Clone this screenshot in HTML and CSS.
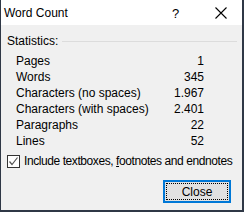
FILE: index.html
```html
<!DOCTYPE html>
<html>
<head>
<meta charset="utf-8">
<link rel="stylesheet" href="styles.css">
</head>
<body>
<div class="window">
  <div class="titlebar">
    <span class="title">Word Count</span>
    <span class="help">?</span>
    <svg class="close-x" width="12" height="12" viewBox="0 0 12 12"><path d="M0.5 0.5 L11.5 11.5 M11.5 0.5 L0.5 11.5" stroke="#000" stroke-width="1.1" fill="none"/></svg>
  </div>
  <div class="content">
    <div class="group-head">
      <span>Statistics:</span>
      <span class="rule"></span>
    </div>
    <div class="stats">
      <div class="row"><span>Pages</span><span>1</span></div>
      <div class="row"><span>Words</span><span>345</span></div>
      <div class="row"><span>Characters (no spaces)</span><span>1.967</span></div>
      <div class="row"><span>Characters (with spaces)</span><span>2.401</span></div>
      <div class="row"><span>Paragraphs</span><span>22</span></div>
      <div class="row"><span>Lines</span><span>52</span></div>
    </div>
    <div class="check">
      <span class="box"><svg width="11" height="11" viewBox="0 0 11 11"><path d="M1.5 5.5 L4 8.5 L9.5 1.5" stroke="#555" stroke-width="1.2" fill="none"/></svg></span>
      <span class="check-label">Include textboxes, <u>f</u>ootnotes and endnotes</span>
    </div>
    <div class="actions">
      <button class="btn"><span class="focus">Close</span></button>
    </div>
  </div>
</div>
</body>
</html>
```
FILE: styles.css
```css
html, body {
  margin: 0;
  padding: 0;
  background: #2f3846;
  width: 244px;
  height: 212px;
  overflow: hidden;
}
.window {
  margin-left: 1px;
  width: 241px;
  height: 210px;
  background: #f0f0f0;
  font-family: "Liberation Sans", Arial, sans-serif;
  font-size: 12px;
  color: #000;
}
.titlebar {
  height: 25px;
  background: #fff;
  display: flex;
  align-items: center;
  position: relative;
}
.title {
  margin-left: 3px;
  font-size: 12px;
  margin-top: 1px;
}
.help {
  position: absolute;
  left: 171px;
  top: 6px;
  font-size: 13px;
}
.close-x {
  position: absolute;
  left: 214px;
  top: 7px;
}
.content {
  padding: 8px 5px 0 6px;
}
.group-head {
  display: flex;
  align-items: center;
  height: 16px;
  line-height: 16px;
}
.rule {
  flex: 1;
  margin-left: 4px;
  border-top: 1px solid #dcdcdc;
}
.stats {
  margin-top: 4px;
  margin-left: 9px;
  width: 188px;
}
.row {
  display: flex;
  justify-content: space-between;
  height: 16px;
  line-height: 16px;
}
.check {
  margin-top: 4px;
  display: flex;
  align-items: center;
  height: 16px;
  line-height: 16px;
  white-space: nowrap;
}
.check-label {
  letter-spacing: -0.42px;
}
.box {
  width: 11px;
  height: 11px;
  border: 1px solid #333;
  background: #fff;
  margin-right: 4px;
  display: flex;
  flex: none;
}
.actions {
  display: flex;
  justify-content: flex-end;
  margin-top: 11px;
  padding-right: 6px;
}
.btn {
  width: 68px;
  height: 23px;
  border: 2px solid #0078d7;
  background: #e1e1e1;
  padding: 1px;
  margin: 0;
  font-family: "Liberation Sans", Arial, sans-serif;
  font-size: 12px;
  color: #000;
  display: flex;
}
.focus {
  flex: 1;
  border: 1px dotted #000;
  display: flex;
  align-items: center;
  justify-content: center;
}
```
